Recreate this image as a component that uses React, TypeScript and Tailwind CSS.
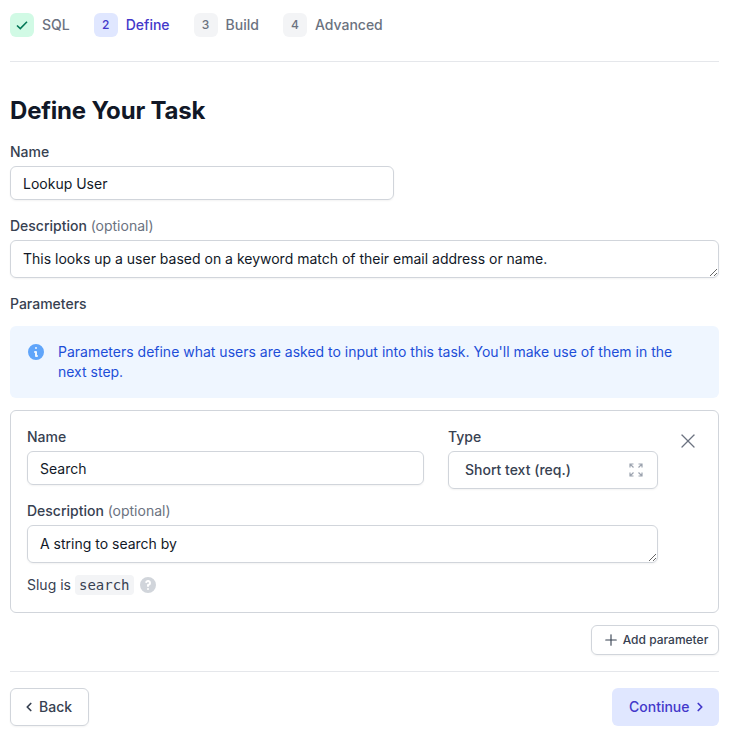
import { ChevronLeft, ChevronRight, Plus, X } from 'lucide-react';

const steps = [
  { label: 'SQL', state: 'done', mark: '' },
  { label: 'Define', state: 'current', mark: '2' },
  { label: 'Build', state: 'todo', mark: '3' },
  { label: 'Advanced', state: 'todo', mark: '4' },
];

function StepBadge({ state, mark }: { state: string; mark: string }) {
  if (state === 'done') {
    return (
      <span className="flex h-6 w-6 items-center justify-center rounded-md bg-[#d1fae5] text-[#047857]">
        <svg width="14" height="14" viewBox="0 0 14 14" fill="none" stroke="currentColor" strokeWidth="1.6">
          <path d="M2 7.5 5.3 10.6 12 3.8" />
        </svg>
      </span>
    );
  }
  return (
    <span
      className={`flex h-6 w-6 items-center justify-center rounded-md text-xs font-medium ${
        state === 'current' ? 'bg-[#e0e7ff] text-[#4338ca]' : 'bg-[#f3f4f6] text-[#6b7280]'
      }`}
    >
      {mark}
    </span>
  );
}

export default function App() {
  return (
    <div className="h-[742px] w-[737px] overflow-hidden bg-white pl-[10px] pr-[18px] pt-[13px] font-['Inter',sans-serif] text-[14px] text-[#374151]">
      <nav className="flex h-6 items-center">
        {steps.map((step) => (
          <div key={step.label} className="mr-6 flex items-center gap-2">
            <StepBadge state={step.state} mark={step.mark} />
            <span className={`text-sm font-medium ${step.state === 'current' ? 'text-[#4338ca]' : 'text-[#6b7280]'}`}>
              {step.label}
            </span>
          </div>
        ))}
      </nav>

      <div className="mt-6 h-px bg-[#e5e7eb]" />

      <h1 className="mt-[33px] text-2xl leading-8 font-bold tracking-[-0.2px] text-[#111827]">Define Your Task</h1>

      <label className="mt-[15px] block text-sm leading-5 font-medium">Name</label>
      <input
        readOnly
        value="Lookup User"
        className="mt-1 block h-[34px] w-[384px] rounded-md border border-[#d1d5db] px-3 text-sm text-[#111827] shadow-xs outline-none"
      />

      <label className="mt-4 block text-sm leading-5 font-medium">
        Description <span className="font-normal text-[#6b7280]">(optional)</span>
      </label>
      <textarea
        readOnly
        rows={1}
        value="This looks up a user based on a keyword match of their email address or name."
        className="mt-1 block h-[38px] w-full rounded-md border border-[#d1d5db] px-3 py-2 text-sm leading-5 text-[#111827] shadow-xs outline-none"
      />

      <div className="mt-4 text-sm leading-5 font-medium">Parameters</div>

      <div className="mt-3 flex h-[72px] gap-3 rounded-md bg-[#eff6ff] px-4 py-4">
        <svg width="20" height="20" viewBox="0 0 20 20" className="shrink-0 fill-[#60a5fa]">
          <path
            fillRule="evenodd"
            clipRule="evenodd"
            d="M18 10a8 8 0 1 1-16 0 8 8 0 0 1 16 0Zm-7-4a1 1 0 1 1-2 0 1 1 0 0 1 2 0ZM9 9a1 1 0 0 0 0 2v3a1 1 0 0 0 1 1h1a1 1 0 1 0 0-2v-3a1 1 0 0 0-1-1H9Z"
          />
        </svg>
        <p className="pr-2 text-sm leading-5 text-[#1d4ed8]">
          Parameters define what users are asked to input into this task. You'll make use of them in the next step.
        </p>
      </div>

      <div className="mt-3 flex h-[203px] rounded-md border border-[#d1d5db] pl-4 pr-[15px] pt-4">
        <div className="w-[631px]">
          <div className="flex gap-6">
            <div className="w-[397px]">
              <label className="block text-sm leading-5 font-medium">Name</label>
              <input
                readOnly
                value="Search"
                className="mt-1 block h-[34px] w-full rounded-md border border-[#d1d5db] px-3 text-sm text-[#111827] shadow-xs outline-none"
              />
            </div>
            <div className="w-[210px]">
              <label className="block text-sm leading-5 font-medium">Type</label>
              <div className="mt-1 flex h-[38px] items-center justify-between rounded-md border border-[#d1d5db] pl-4 pr-[14px] text-sm font-medium shadow-xs">
                <span>Short text (req.)</span>
                <svg width="14" height="14" viewBox="0 0 14 14" fill="none" stroke="#9ca3af" strokeWidth="1.2">
                  <path d="M1 4.5V1h3.5M1 1l3.5 3.5M9.5 1H13v3.5M13 1 9.5 4.5M1 9.5V13h3.5M1 13l3.5-3.5M13 9.5V13H9.5M13 13 9.5 9.5" />
                </svg>
              </div>
            </div>
          </div>

          <label className="mt-3 block text-sm leading-5 font-medium">
            Description <span className="font-normal text-[#6b7280]">(optional)</span>
          </label>
          <textarea
            readOnly
            rows={1}
            value="A string to search by"
            className="mt-1 block h-[38px] w-full rounded-md border border-[#d1d5db] px-3 py-2 text-sm leading-5 text-[#111827] shadow-xs outline-none"
          />

          <div className="mt-3 flex items-center text-sm leading-5">
            <span>Slug is</span>
            <code className="ml-1 rounded bg-[#f3f4f6] px-1 font-['DejaVu_Sans_Mono',monospace] text-[14px] leading-5">search</code>
            <svg width="20" height="20" viewBox="0 0 20 20" className="ml-1 fill-[#d1d5db]">
              <path
                fillRule="evenodd"
                clipRule="evenodd"
                d="M18 10a8 8 0 1 1-16 0 8 8 0 0 1 16 0Zm-8-3a1 1 0 0 0-.87.5 1 1 0 1 1-1.73-1A3 3 0 0 1 13 8a3 3 0 0 1-2 2.83V11a1 1 0 1 1-2 0v-1a1 1 0 0 1 1-1 1 1 0 1 0 0-2Zm0 8a1 1 0 1 0 0-2 1 1 0 0 0 0 2Z"
              />
            </svg>
          </div>
        </div>
        <X className="ml-[18px] mt-[2px] text-[#6b7280]" size={24} strokeWidth={1.3} />
      </div>

      <div className="mt-3 flex justify-end">
        <button
          type="button"
          className="flex h-[30px] w-[128px] items-center justify-center gap-[3px] rounded-md border border-[#d1d5db] text-xs font-medium shadow-xs"
        >
          <Plus size={18} strokeWidth={1.5} />
          Add parameter
        </button>
      </div>

      <div className="mt-4 h-px bg-[#e5e7eb]" />

      <div className="mt-4 flex justify-between">
        <button
          type="button"
          className="flex h-[38px] w-[79px] items-center gap-0.5 rounded-md border border-[#d1d5db] pl-[10px] text-sm font-medium shadow-xs"
        >
          <ChevronLeft size={14} strokeWidth={3} className="mx-px" />
          Back
        </button>
        <button
          type="button"
          className="flex h-[38px] w-[107px] items-center gap-0.5 rounded-md bg-[#e0e7ff] pl-[17px] text-sm font-medium text-[#4338ca]"
        >
          Continue
          <ChevronRight size={14} strokeWidth={3} className="mx-px" />
        </button>
      </div>
    </div>
  );
}
